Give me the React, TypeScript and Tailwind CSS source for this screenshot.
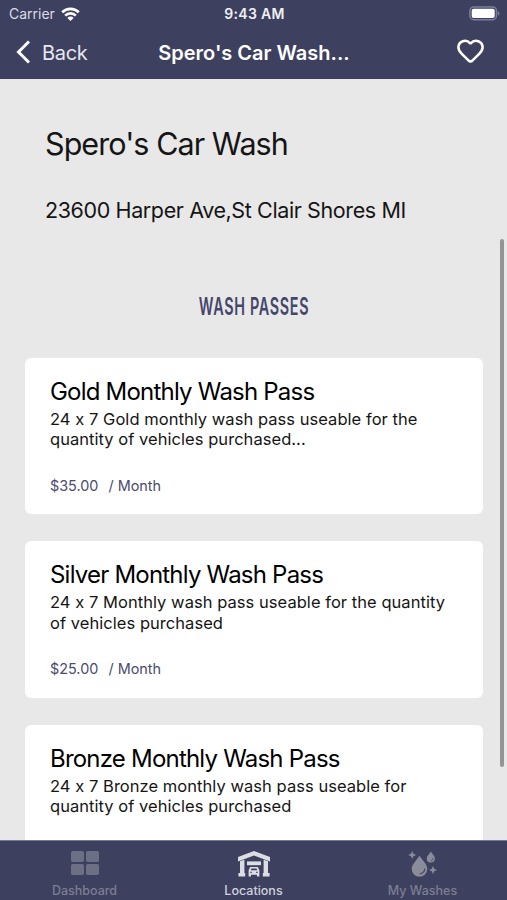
import { Heart } from 'lucide-react';

type WashPass = {
 name: string;
 lines: string[];
 price?: string;
};

const passes: WashPass[] = [
 {
  name: 'Gold Monthly Wash Pass',
  lines: ['24 x 7 Gold monthly wash pass useable for the', 'quantity of vehicles purchased...'],
  price: '$35.00',
 },
 {
  name: 'Silver Monthly Wash Pass',
  lines: ['24 x 7 Monthly wash pass useable for the quantity', 'of vehicles purchased'],
  price: '$25.00',
 },
 {
  name: 'Bronze Monthly Wash Pass',
  lines: ['24 x 7 Bronze monthly wash pass useable for', 'quantity of vehicles purchased'],
 },
];

function WifiIcon() {
 return (
  <svg width="19" height="14" viewBox="0 0 19 14" fill="none" stroke="#fff" strokeWidth="2.7">
   <path d="M1.2 5.2a11.8 11.8 0 0 1 16.6 0" />
   <path d="M4.2 8.6a7.5 7.5 0 0 1 10.6 0" />
   <path d="M9.5 13.9 6.4 10.9a4.4 4.4 0 0 1 6.2 0Z" fill="#fff" stroke="none" />
  </svg>
 );
}

function BatteryIcon() {
 return (
  <svg width="31" height="15" viewBox="0 0 31 15">
   <rect x="0.9" y="0.9" width="26.6" height="12.8" rx="4" fill="none" stroke="#7d7f97" strokeWidth="1.5" />
   <rect x="2.7" y="2.7" width="23" height="9.2" rx="2" fill="#fff" />
   <path d="M28.9 5v4.6c2-.8 2-3.8 0-4.6Z" fill="#7d7f97" />
  </svg>
 );
}

function DashboardIcon() {
 return (
  <svg width="28" height="24" viewBox="0 0 28 24" fill="#6d6f84">
   <rect x="0" y="0" width="13" height="11" rx="1.8" />
   <rect x="15" y="0" width="13" height="11" rx="1.8" />
   <rect x="0" y="13" width="13" height="11" rx="1.8" />
   <rect x="15" y="13" width="13" height="11" rx="1.8" />
  </svg>
 );
}

function LocationsIcon() {
 return (
  <svg width="34" height="26" viewBox="0 0 34 26" fill="#dcdde2">
   <path d="M17 0 33 6v4.6L17 4.6 1 10.6V6Z" />
   <path d="M3 10.3l4.4-1.6V22h.8v3.6H1.4V22H3ZM31 10.3l-4.4-1.6V22h-.8v3.6h6.8V22H31Z" />
   <path d="M10 10.4h14v3.8H10Z" />
   <path d="M13.2 16h7.6l1.6 3.3v6.3h-2.4v-1.8h-6v1.8h-2.4v-6.3Zm1.3 1.5-.8 1.8h6.6l-.8-1.8Z" fillRule="evenodd" />
   <path d="M13.4 20.8h1.4v1.2h-1.4ZM19.2 20.8h1.4v1.2h-1.4Z" fill="#3e4060" />
  </svg>
 );
}

function WashesIcon() {
 return (
  <svg width="30" height="26" viewBox="0 0 30 26" fill="#8b8c99">
   <path d="M11.5 4.5C14 9 19.3 13.2 19.3 18a7.8 7.8 0 0 1-15.6 0C3.7 13.2 9 9 11.5 4.5Z" />
   <path d="M16.8 17.5a5.2 5.2 0 0 1-5 5.3" fill="none" stroke="#4a4c68" strokeWidth="1.3" />
   <path d="M22.8 0.6c1.3 2.5 4.1 4.4 4.1 6.9a4.1 4.1 0 0 1-8.2 0c0-2.5 2.8-4.4 4.1-6.9Z" />
   <path d="M25.1 7.3a2.5 2.5 0 0 1-2.3 2.4" fill="none" stroke="#4a4c68" strokeWidth="0.9" />
   <path d="M4.2 0 5.4 2.8 8.2 4 5.4 5.2 4.2 8 3 5.2.2 4 3 2.8ZM25 15l1.2 2.8L29 19l-2.8 1.2L25 23l-1.2-2.8L21 19l2.8-1.2Z" />
  </svg>
 );
}

function PassCard({ pass }: { pass: WashPass }) {
 return (
  <div className="h-[156.3px] shrink-0 rounded-[6px] bg-white pl-[25px] pt-[18px]">
   <h3 className="h-[32px] whitespace-nowrap text-[24px] leading-[31px] tracking-[-0.79px] text-black">{pass.name}</h3>
   {pass.lines.map((line) => (
    <p key={line} className="h-[20.3px] whitespace-nowrap text-[16.5px] leading-[23px] tracking-[0.045px]">
     {line}
    </p>
   ))}
   {pass.price && (
    <div className="mt-[27px] flex text-[14.4px] leading-[20px] text-[#4a4b6f]">
     <span className="w-[58.5px]">{pass.price}</span>
     <span>/ Month</span>
    </div>
   )}
  </div>
 );
}

export default function App() {
 return (
  <div className="flex h-[900px] w-[507px] flex-col overflow-hidden bg-[#e8e8e8] font-['Inter',sans-serif] text-[#151515] [font-feature-settings:'calt'_0]">
   <header className="h-[79px] shrink-0 bg-[#3e4060] text-white">
    <div className="grid h-[27px] grid-cols-3 items-center pl-[9px] pr-[7px]">
     <div className="flex items-center gap-[6px] text-[14px] text-[#dcdde4]">
      <span>Carrier</span>
      <WifiIcon />
     </div>
     <div className="text-center text-[14px] font-semibold tracking-[0.3px] text-[#f0f0f4]">9:43 AM</div>
     <div className="flex justify-end">
      <BatteryIcon />
     </div>
    </div>
    <div className="grid h-[50px] grid-cols-[130px_1fr_130px] items-center">
     <div className="flex items-center gap-[12px] pl-[16px]">
      <svg width="14" height="24" viewBox="0 0 14 24" fill="none" stroke="#fff" strokeWidth="3">
       <path d="M13 1.5 2.5 12 13 22.5" />
      </svg>
      <span className="pt-px text-[20px] tracking-[-0.3px] text-[#e6e7ee]">Back</span>
     </div>
     <div className="whitespace-nowrap pl-px pt-px text-center text-[20px] font-semibold">Spero's Car Wash...</div>
     <div className="flex justify-end pb-[3px] pr-[22px]">
      <Heart className="h-[29px] w-[29px]" strokeWidth={2.1} />
     </div>
    </div>
   </header>

   <main className="flex min-h-0 flex-1 overflow-hidden">
    <div className="flex w-[483px] shrink-0 flex-col pl-[25px]">
     <h1 className="mt-[45px] h-[40px] shrink-0 whitespace-nowrap pl-[20px] text-[30.5px] leading-[40px] tracking-[-0.94px]">Spero's Car Wash</h1>
     <p className="mt-[31px] h-[31px] shrink-0 whitespace-nowrap pl-[20px] text-[21.5px] leading-[30px] tracking-[-0.39px]">23600 Harper Ave,St Clair Shores MI</p>
     <h2 className="mt-[66px] h-[30px] shrink-0 origin-center scale-x-[0.6] whitespace-nowrap text-center text-[24px] font-semibold leading-[30px] tracking-[1.1px] text-[#45466b]">WASH PASSES</h2>
     <div className="mt-[36px] flex shrink-0 flex-col gap-[27px]">
      {passes.map((pass) => (
       <PassCard key={pass.name} pass={pass} />
      ))}
     </div>
    </div>
    <div className="flex flex-1 justify-end pr-[3px] pt-[160px]">
     <div className="h-[528px] w-[4px] rounded-full bg-[#949494]" />
    </div>
   </main>

   <nav className="grid h-[60px] shrink-0 grid-cols-3 border-t border-[#777990] bg-[#3e4060] text-[12.5px] font-medium">
    <div className="flex flex-col items-center pt-[10px] text-[#7c7e91]">
     <div className="h-[31px]"><DashboardIcon /></div>
     <span className="leading-[18px]">Dashboard</span>
    </div>
    <div className="flex flex-col items-center pt-[10px] text-[#d0d1dc]">
     <div className="h-[31px]"><LocationsIcon /></div>
     <span className="leading-[18px]">Locations</span>
    </div>
    <div className="flex flex-col items-center pt-[10px] text-[#7c7e91]">
     <div className="h-[31px]"><WashesIcon /></div>
     <span className="leading-[18px]">My Washes</span>
    </div>
   </nav>
  </div>
 );
}
